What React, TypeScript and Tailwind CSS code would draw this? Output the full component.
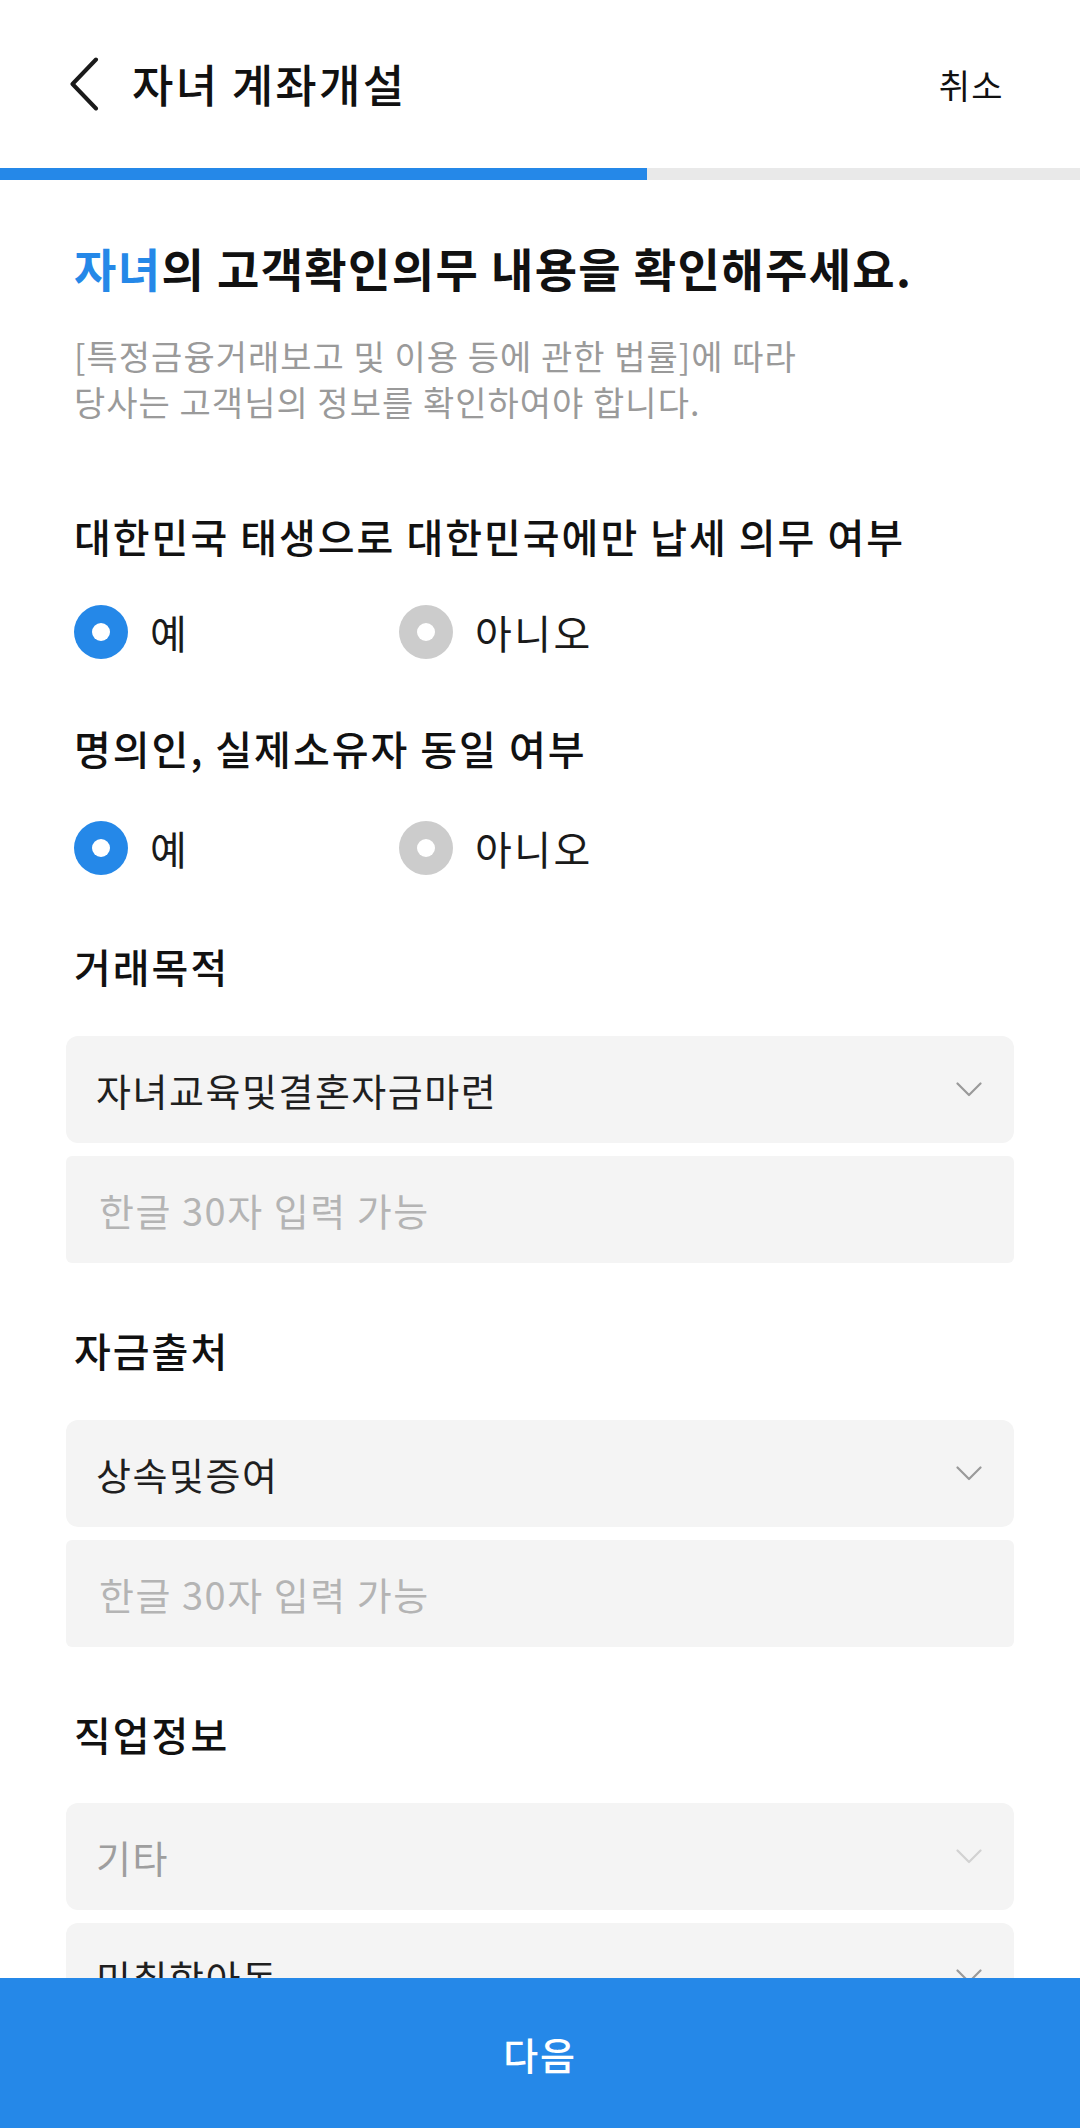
import React from "react";

const FONT = { fontFamily: '"Noto Sans CJK KR", "Noto Sans", sans-serif' };

function ChevronDown({ light }: { light?: boolean }) {
  return (
    <svg width="26" height="15" viewBox="0 0 26 15" fill="none">
      <polyline
        points="1.5,1.5 13,13 24.5,1.5"
        stroke={light ? "#d2d2d2" : "#9a9a9a"}
        strokeWidth="2.2"
        strokeLinecap="round"
        strokeLinejoin="round"
      />
    </svg>
  );
}

function Radio({ checked, label }: { checked: boolean; label: string }) {
  return (
    <div className="flex items-center gap-[22px] w-[325px]">
      <span
        className={
          "flex items-center justify-center w-[54px] h-[54px] rounded-full " +
          (checked ? "bg-[#2588e8]" : "bg-[#cccccc]")
        }
      >
        <span className="w-[18px] h-[18px] rounded-full bg-white" />
      </span>
      <span className="text-[40px] leading-[54px] tracking-[0.06em] text-[#1a1a1a]">{label}</span>
    </div>
  );
}

function SelectBox({ value, muted }: { value: string; muted?: boolean }) {
  return (
    <div className="flex items-center justify-between h-[107px] rounded-[12px] bg-[#f4f4f4] pl-[30px] pr-[32px]">
      <span className={"text-[38px] tracking-[0.04em] " + (muted ? "text-[#9e9e9e]" : "text-[#1f1f1f]")}>
        {value}
      </span>
      <ChevronDown light={muted} />
    </div>
  );
}

function TextBox() {
  return (
    <div className="flex items-center h-[107px] rounded-[6px] bg-[#f4f4f4] pl-[33px] mt-[13px]">
      <span className="text-[38px] tracking-[0.04em] text-[#b4b4b4]">한글 30자 입력 가능</span>
    </div>
  );
}

function SectionLabel({ children, first }: { children: React.ReactNode; first?: boolean }) {
  return (
    <div
      className={
        "px-[8px] text-[40px] leading-[50px] tracking-[0.05em] font-medium text-[#111] " +
        (first ? "mt-[66px]" : "mt-[62px]")
      }
    >
      {children}
    </div>
  );
}

export default function App() {
  return (
    <div className="relative w-[1080px] min-h-[2128px] bg-white" style={FONT}>
      {/* Header */}
      <header className="flex items-center justify-between h-[168px] pl-[69px] pr-[76px]">
        <div className="flex items-center gap-[33px]">
          <svg width="30" height="54" viewBox="0 0 30 54" fill="none">
            <polyline
              points="27,2.5 3.5,27 27,51.5"
              stroke="#1a1a1a"
              strokeWidth="4"
              strokeLinecap="round"
              strokeLinejoin="round"
            />
          </svg>
          <h1 className="text-[45px] tracking-[0.05em] font-medium text-[#111]">자녀 계좌개설</h1>
        </div>
        <span className="text-[34px] tracking-[0.04em] text-[#111]">취소</span>
      </header>

      {/* Progress */}
      <div className="h-[12px] bg-[#e9e9e9]">
        <div className="h-full w-[647px] bg-[#2588e8]" />
      </div>

      <main className="px-[66px] pb-[200px]">
        <div className="px-[8px]">
          <h2 className="mt-[57px] text-[46px] leading-[60px] tracking-[0.03em] font-bold text-[#111]">
            <span className="text-[#2588e8]">자녀</span>의 고객확인의무 내용을 확인해주세요.
          </h2>
          <p className="mt-[36px] text-[34px] leading-[46px] tracking-[0.03em] text-[#9a9a9a]">
            [특정금융거래보고 및 이용 등에 관한 법률]에 따라
            <br />
            당사는 고객님의 정보를 확인하여야 합니다.
          </p>

          <div className="mt-[86px] text-[40px] leading-[50px] tracking-[0.05em] font-medium text-[#111]">
            대한민국 태생으로 대한민국에만 납세 의무 여부
          </div>
          <div className="flex mt-[44px]">
            <Radio checked label="예" />
            <Radio checked={false} label="아니오" />
          </div>

          <div className="mt-[64px] text-[40px] leading-[50px] tracking-[0.05em] font-medium text-[#111]">
            명의인, 실제소유자 동일 여부
          </div>
          <div className="flex mt-[48px]">
            <Radio checked label="예" />
            <Radio checked={false} label="아니오" />
          </div>
        </div>

        <SectionLabel first>거래목적</SectionLabel>
        <div className="mt-[45px]">
          <SelectBox value="자녀교육및결혼자금마련" />
          <TextBox />
        </div>

        <SectionLabel>자금출처</SectionLabel>
        <div className="mt-[45px]">
          <SelectBox value="상속및증여" />
          <TextBox />
        </div>

        <SectionLabel>직업정보</SectionLabel>
        <div className="mt-[44px] flex flex-col gap-[13px]">
          <SelectBox value="기타" muted />
          <SelectBox value="미취학아동" />
        </div>
      </main>

      {/* Bottom button */}
      <button className="fixed bottom-0 left-0 w-[1080px] h-[150px] bg-[#2588e8] text-white text-[38px] tracking-[0.05em] font-medium">
        다음
      </button>
    </div>
  );
}
